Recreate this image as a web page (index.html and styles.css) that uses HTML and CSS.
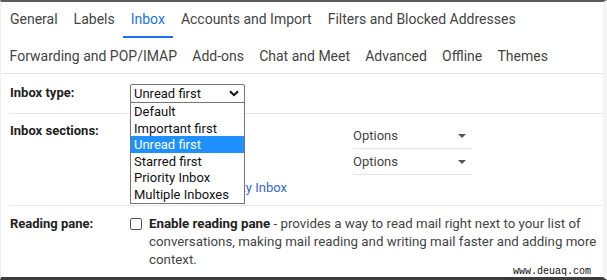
FILE: index.html
```html
<!DOCTYPE html>
<html>
<head>
<meta charset="utf-8">
<link rel="stylesheet" href="styles.css">
</head>
<body>
<div class="frame">
  <nav class="tabs">
    <div class="tab-row first">
      <span class="tab">General</span>
      <span class="tab">Labels</span>
      <span class="tab active">Inbox</span>
      <span class="tab">Accounts and Import</span>
      <span class="tab">Filters and Blocked Addresses</span>
    </div>
    <div class="tab-row second">
      <span class="tab">Forwarding and POP/IMAP</span>
      <span class="tab">Add-ons</span>
      <span class="tab">Chat and Meet</span>
      <span class="tab">Advanced</span>
      <span class="tab">Offline</span>
      <span class="tab">Themes</span>
    </div>
  </nav>

  <div class="setting row-type">
    <div class="label">Inbox type:</div>
    <div class="content">
      <div class="select-wrap">
        <div class="select">
          <span>Unread first</span>
          <svg class="chev" width="10" height="7" viewBox="0 0 10 7"><path d="M1 1.2 L5 5.2 L9 1.2" fill="none" stroke="#111" stroke-width="2"/></svg>
        </div>
        <ul class="dropdown">
          <li>Default</li>
          <li>Important first</li>
          <li class="hl">Unread first</li>
          <li>Starred first</li>
          <li>Priority Inbox</li>
          <li>Multiple Inboxes</li>
        </ul>
      </div>
    </div>
  </div>

  <div class="setting row-sections">
    <div class="label">Inbox sections:</div>
    <div class="content">
      <div class="section-line">
        <div class="opt"><span>Options</span><span class="tri"></span></div>
      </div>
      <div class="section-line">
        <div class="opt"><span>Options</span><span class="tri"></span></div>
      </div>
      <a class="link">Switch to Priority Inbox</a>
    </div>
  </div>

  <div class="setting row-pane">
    <div class="label">Reading pane:</div>
    <div class="content pane">
      <span class="checkbox"></span>
      <p class="desc"><b>Enable reading pane</b> - provides a way to read mail right next to your list of conversations, making mail reading and writing mail faster and adding more context.</p>
    </div>
  </div>

  <div class="watermark">www.deuaq.com</div>
</div>
</body>
</html>
```
FILE: styles.css
```css
* { box-sizing: border-box; }
html, body { margin: 0; padding: 0; background: #fff; }
body { font-family: Roboto, "Liberation Sans", Arial, sans-serif; }

.frame {
  position: relative;
  width: 607px;
  height: 280px;
  overflow: hidden;
  border-top: 2px solid #5a5a5a;
  border-bottom: 3px solid #3c3c3c;
  border-left: 1px solid #f0f0f0;
  border-right: 4px solid #f4f4f4;
}

.tabs {
  border-bottom: 1px solid #e6e6e6;
  padding-left: 1px;
}
.tab-row {
  display: flex;
}
.tab-row.first { height: 36px; }
.tab-row.second { height: 35px; }
.tab {
  padding: 0 8px;
  font-size: 14px;
  line-height: 18px;
  color: #444;
  border-bottom: 2px solid transparent;
}
.first .tab { padding-top: 8px; }
.second .tab { padding-top: 9px; }
.second .tab { padding-left: 7.6px; padding-right: 7.6px; }
.tab.active {
  color: #1a73e8;
  border-bottom-color: #1a73e8;
}

.setting {
  display: grid;
  grid-template-columns: 120px 1fr;
  margin-left: 9px;
  border-bottom: 1px solid #e8e8e8;
  font-size: 13px;
  color: #222;
}
.label {
  font-weight: bold;
  font-size: 13px;
  line-height: 18px;
  color: #222;
}
.row-type { height: 40px; padding-top: 10px; }

.select-wrap { position: relative; width: 115px; }
.select {
  height: 19px;
  border: 1px solid #767676;
  border-radius: 2px;
  display: flex;
  align-items: center;
  justify-content: space-between;
  padding: 0 5px 0 3px;
  font-size: 13px;
  color: #111;
}
.dropdown {
  position: absolute;
  top: 18px;
  left: 0;
  width: 115px;
  margin: 0;
  padding: 0;
  list-style: none;
  background: #fff;
  border: 1px solid #767676;
  z-index: 5;
}
.dropdown li {
  height: 16.6px;
  line-height: 17.6px;
  padding-left: 3px;
  font-size: 13px;
  color: #111;
}
.dropdown li.hl { background: #1e90ff; color: #fff; }

.row-sections { height: 92px; padding-top: 8px; }
.section-line {
  display: flex;
  align-items: center;
  height: 26px;
  padding-left: 223px;
}
.section-line:first-child { margin-top: 1px; }
.opt {
  width: 119px;
  height: 26px;
  display: flex;
  align-items: center;
  justify-content: space-between;
  padding-right: 6px;
  border-bottom: 1px solid #e6e6e6;
  color: #444;
  font-size: 13px;
}
.tri {
  width: 0; height: 0;
  border-left: 4px solid transparent;
  border-right: 4px solid transparent;
  border-top: 4px solid #555;
}
.link {
  display: block;
  margin-top: 4px;
  padding-left: 24px;
  line-height: 18px;
  color: #3367d6;
}

.row-pane { padding-top: 9px; border-bottom: none; }
.pane { display: flex; align-items: flex-start; gap: 7px; }
.checkbox {
  flex: none;
  width: 12px; height: 12px;
  margin-top: 3px;
  border: 1px solid #555;
  border-radius: 2px;
}
.desc {
  margin: 0;
  line-height: 18px;
  color: #444;
  font-size: 13.3px;
}
.desc b { color: #222; }

.watermark {
  position: absolute;
  right: 12px;
  bottom: 0;
  font-family: "Liberation Mono", monospace;
  font-size: 10px;
  color: #111;
  background: #fff;
}
```
